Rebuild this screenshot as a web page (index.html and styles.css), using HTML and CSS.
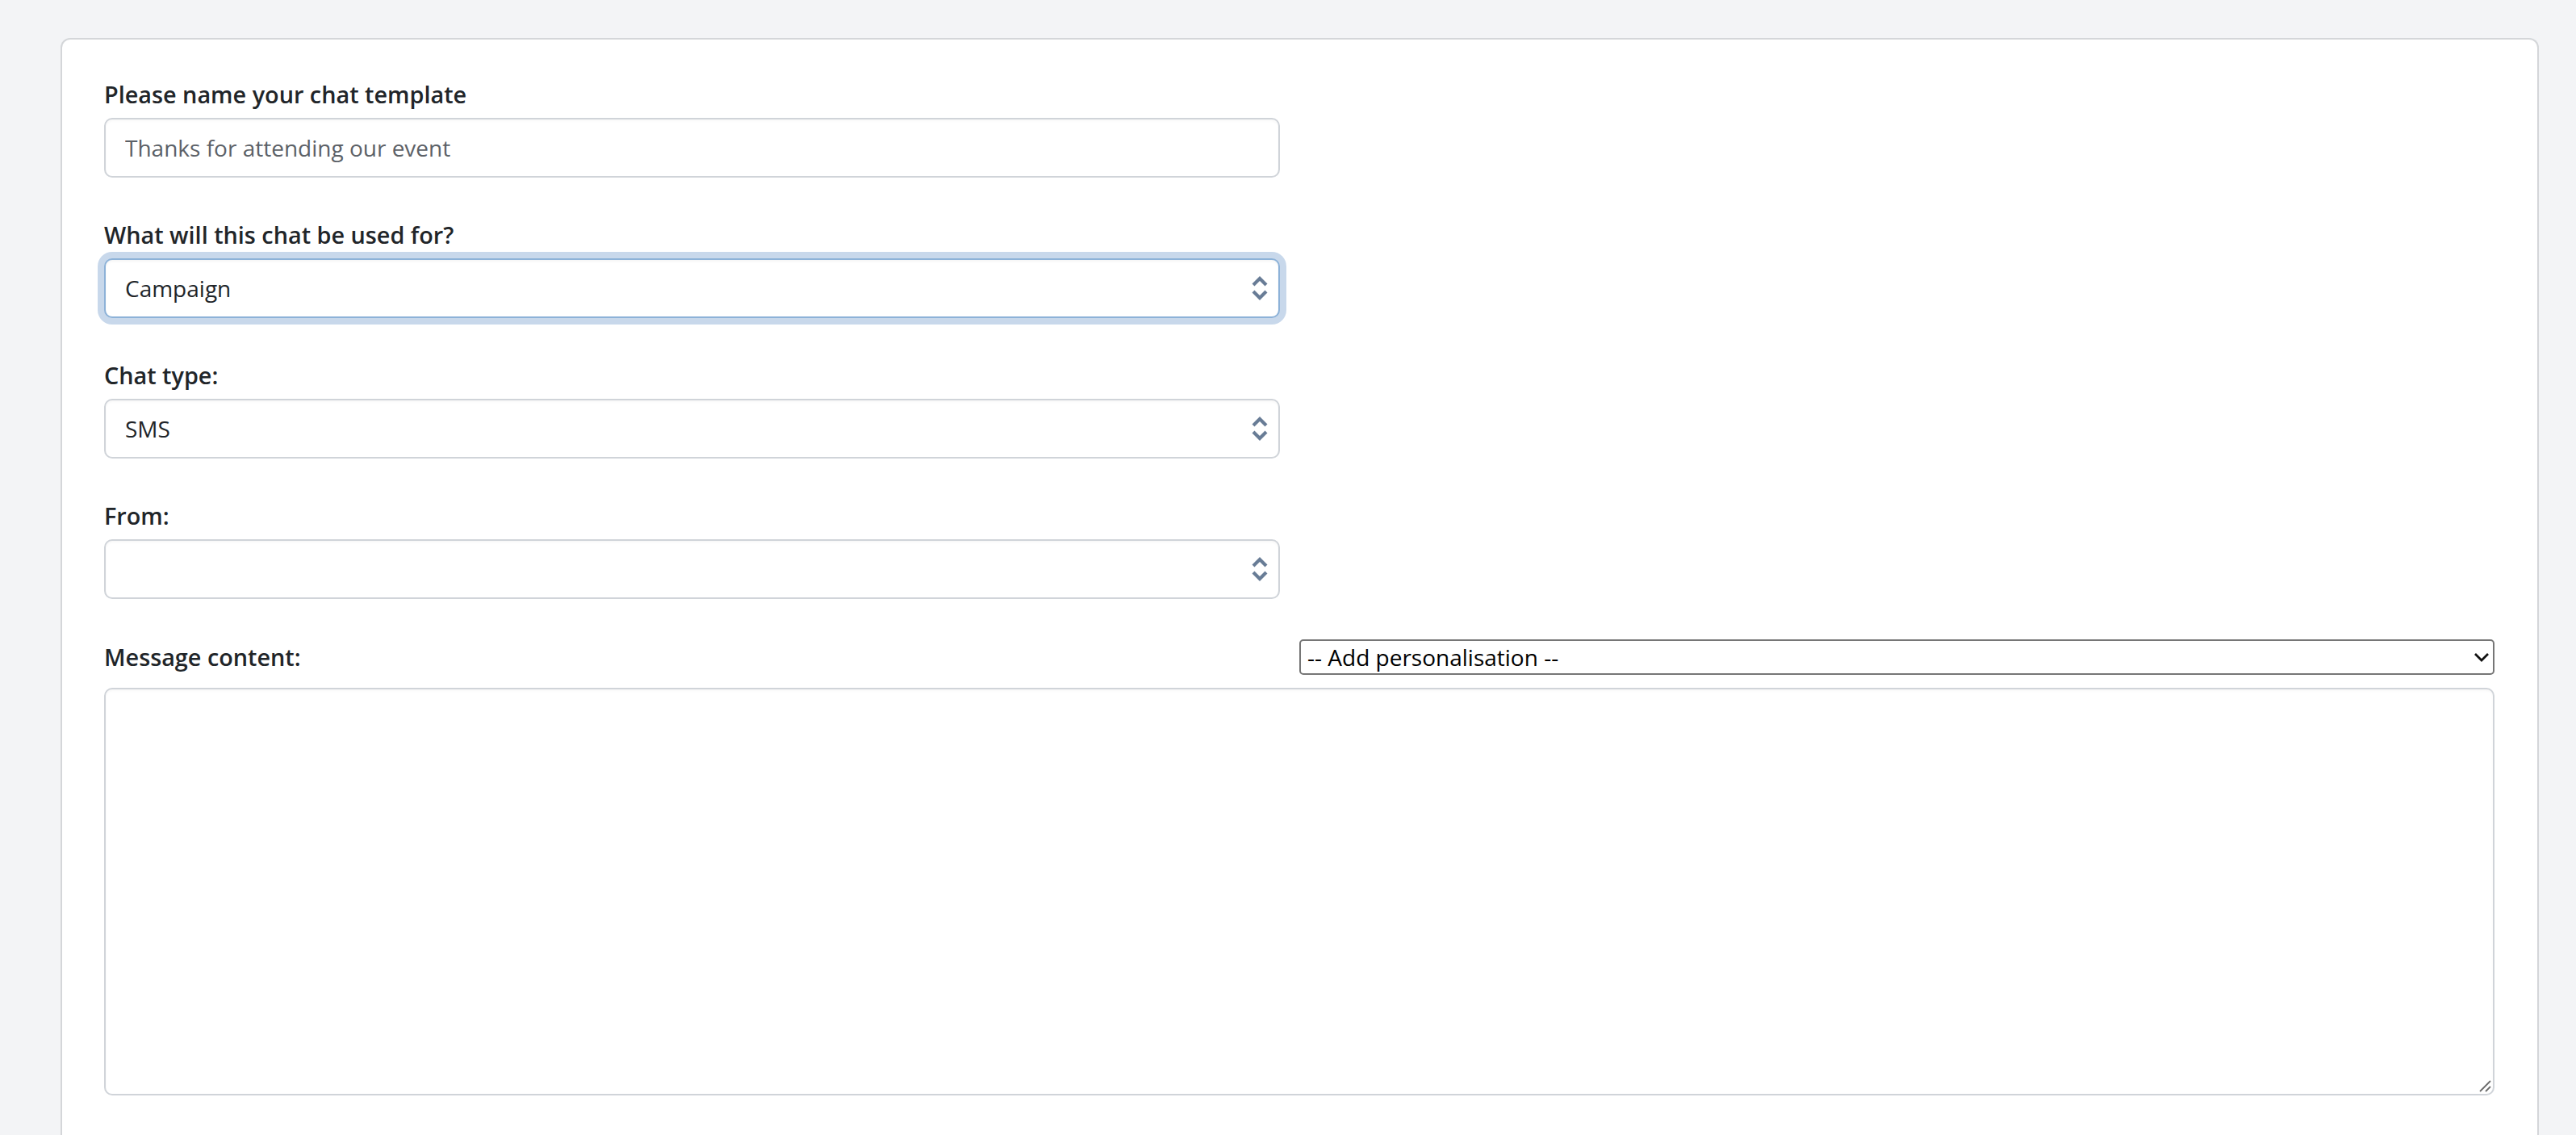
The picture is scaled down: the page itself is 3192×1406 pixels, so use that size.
FILE: index.html
```html
<!DOCTYPE html>
<html lang="en">
<head>
<meta charset="utf-8">
<title>Chat template</title>
<link rel="stylesheet" href="styles.css">
</head>
<body>
<div class="page">
  <form class="card">
    <div class="top-fields">
      <div class="group">
        <label class="label" for="name">Please name your chat template</label>
        <input class="control" id="name" type="text" placeholder="Thanks for attending our event">
      </div>
      <div class="group">
        <label class="label" for="usage">What will this chat be used for?</label>
        <div class="select-wrap">
          <select class="control select focused" id="usage">
            <option>Campaign</option>
          </select>
          <svg class="updown" viewBox="0 0 22 32" aria-hidden="true"><path d="M3 12 L11 4 L19 12 M3 20 L11 28 L19 20" fill="none" stroke="currentColor" stroke-width="4.2" stroke-linejoin="miter"/></svg>
        </div>
      </div>
      <div class="group">
        <label class="label" for="type">Chat type:</label>
        <div class="select-wrap">
          <select class="control select" id="type">
            <option>SMS</option>
          </select>
          <svg class="updown" viewBox="0 0 22 32" aria-hidden="true"><path d="M3 12 L11 4 L19 12 M3 20 L11 28 L19 20" fill="none" stroke="currentColor" stroke-width="4.2" stroke-linejoin="miter"/></svg>
        </div>
      </div>
      <div class="group">
        <label class="label" for="from">From:</label>
        <div class="select-wrap">
          <select class="control select" id="from">
            <option></option>
          </select>
          <svg class="updown" viewBox="0 0 22 32" aria-hidden="true"><path d="M3 12 L11 4 L19 12 M3 20 L11 28 L19 20" fill="none" stroke="currentColor" stroke-width="4.2" stroke-linejoin="miter"/></svg>
        </div>
      </div>
    </div>
    <div class="message-row">
      <label class="label" for="message">Message content:</label>
      <div class="select-wrap">
        <select class="native-select">
          <option>-- Add personalisation --</option>
        </select>
        <svg class="chev" viewBox="0 0 20 12" aria-hidden="true"><path d="M2 2 L10 10 L18 2" fill="none" stroke="currentColor" stroke-width="2.8"/></svg>
      </div>
    </div>
    <div class="textarea-wrap">
      <textarea class="textarea" id="message"></textarea>
      <svg class="grip" viewBox="0 0 16 16" aria-hidden="true"><path d="M2 15 L15 2 M9 15 L15 9" fill="none" stroke="#6b6b6b" stroke-width="1.8"/></svg>
    </div>
  </form>
</div>
</body>
</html>
```
FILE: styles.css
```css
* { box-sizing: border-box; }

html, body {
  margin: 0;
  padding: 0;
  background: #f3f4f6;
  font-family: "Open Sans", "Noto Sans", sans-serif;
  color: #212529;
}

.page {
  padding: 47px 46px 0 75px;
  height: 1406px;
  overflow: hidden;
}

.card {
  background: #ffffff;
  border: 2px solid #d4d6d9;
  border-bottom: none;
  border-radius: 12px 12px 0 0;
  padding: 47px 53px 0 52px;
  min-height: 1400px;
}

.top-fields {
  width: 50%;
  padding-right: 24px;
}

.group {
  margin-bottom: 50px;
}

.label {
  display: block;
  font-size: 28.8px;
  line-height: 42px;
  font-weight: 600;
  color: #212529;
  margin-bottom: 8px;
}

.control {
  display: block;
  width: 100%;
  height: 74px;
  border: 2px solid #d0d4d9;
  border-radius: 10px;
  padding: 0 24px;
  font-family: "Open Sans", "Noto Sans", sans-serif;
  font-size: 28px;
  color: #212529;
  background: #ffffff;
  box-shadow: inset 0 2px 3px rgba(0, 0, 0, 0.03);
  outline: none;
}

.control::placeholder {
  color: #5c6167;
  opacity: 1;
}

.select {
  appearance: none;
  -webkit-appearance: none;
  padding-right: 60px;
}

.select.focused {
  border-color: #8db2d8;
  box-shadow: 0 0 0 8px #c8d8eb, inset 0 2px 3px rgba(0, 0, 0, 0.04);
}

.select-wrap {
  position: relative;
}

.updown {
  position: absolute;
  right: 14px;
  top: 50%;
  width: 22px;
  height: 32px;
  transform: translateY(-50%);
  color: #687c96;
  pointer-events: none;
}

.message-row {
  display: grid;
  grid-template-columns: 1fr 1fr;
  align-items: center;
  height: 44px;
  margin-bottom: 16px;
}

.message-row .label {
  margin-bottom: 0;
}

.native-select {
  appearance: none;
  -webkit-appearance: none;
  display: block;
  width: 100%;
  height: 44px;
  border: 2px solid #767676;
  border-radius: 5px;
  background: #ffffff;
  padding: 0 40px 0 8px;
  font-family: "Open Sans", "Noto Sans", sans-serif;
  font-size: 28px;
  color: #000000;
  outline: none;
}

.chev {
  position: absolute;
  right: 6px;
  top: 50%;
  width: 20px;
  height: 12px;
  transform: translateY(-50%);
  color: #111111;
  pointer-events: none;
}

.textarea-wrap {
  position: relative;
}

.textarea {
  display: block;
  width: 100%;
  height: 505px;
  border: 2px solid #d0d4d9;
  border-radius: 10px;
  padding: 12px 24px;
  font-family: "Open Sans", "Noto Sans", sans-serif;
  font-size: 28px;
  color: #212529;
  background: #ffffff;
  resize: none;
  outline: none;
  box-shadow: inset 0 2px 3px rgba(0, 0, 0, 0.03);
}

.grip {
  position: absolute;
  right: 4px;
  bottom: 4px;
  width: 16px;
  height: 16px;
  pointer-events: none;
}
```
